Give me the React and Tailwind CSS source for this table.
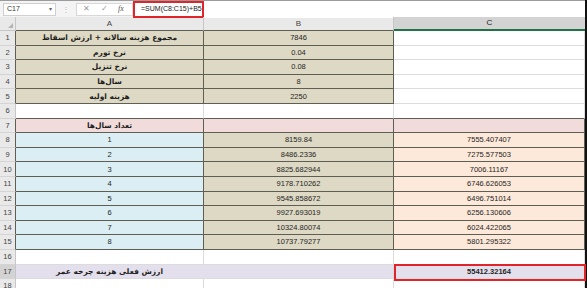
import React from 'react'

const FA = { fontFamily: '"DejaVu Sans", "Noto Sans", sans-serif' }
const NUM = { fontFamily: '"Liberation Sans", Arial, sans-serif' }

const DARK = 'border-[#5e5e52]'
const LIGHT = 'border-[#dcdcdc]'

// per-row cell styles
const ROWS = [
  { n: 1, a: 'مجموع هزینه سالانه + ارزش اسقاط', b: '7846', kind: 'input' },
  { n: 2, a: 'نرخ تورم', b: '0.04', kind: 'input' },
  { n: 3, a: 'نرخ تنزیل', b: '0.08', kind: 'input' },
  { n: 4, a: 'سال‌ها', b: '8', kind: 'input' },
  { n: 5, a: 'هزینه اولیه', b: '2250', kind: 'input' },
  { n: 6, kind: 'gap' },
  { n: 7, a: 'تعداد سال‌ها', kind: 'head' },
  { n: 8, a: '1', b: '8159.84', c: '7555.407407', kind: 'data' },
  { n: 9, a: '2', b: '8486.2336', c: '7275.577503', kind: 'data' },
  { n: 10, a: '3', b: '8825.682944', c: '7006.11167', kind: 'data' },
  { n: 11, a: '4', b: '9178.710262', c: '6746.626053', kind: 'data' },
  { n: 12, a: '5', b: '9545.858672', c: '6496.751014', kind: 'data' },
  { n: 13, a: '6', b: '9927.693019', c: '6256.130606', kind: 'data' },
  { n: 14, a: '7', b: '10324.80074', c: '6024.422065', kind: 'data' },
  { n: 15, a: '8', b: '10737.79277', c: '5801.295322', kind: 'data' },
  { n: 16, kind: 'blank' },
  { n: 17, a: 'ارزش فعلی هزینه چرخه عمر', c: '55412.32164', kind: 'total' },
  { n: 18, kind: 'blank' },
]

const STYLES = {
  input: {
    row: `border-r ${DARK}`,
    a: `bg-[#ddd9c4] border-r border-b ${DARK}`,
    b: `bg-[#ddd9c4] border-r border-b ${DARK}`,
    c: `bg-white border-r border-b ${LIGHT}`,
  },
  gap: {
    row: `border-r border-[#c6c6c6]`,
    a: `bg-white border-r border-b border-r-[#dcdcdc] border-b-[#5e5e52]`,
    b: `bg-white border-r border-b border-r-[#dcdcdc] border-b-[#5e5e52]`,
    c: `bg-white border-r border-b border-r-[#dcdcdc] border-b-[#5e5e52]`,
  },
  head: {
    row: `border-r ${DARK}`,
    a: `bg-[#f2dcdb] border-r border-b ${DARK}`,
    b: `bg-[#f2dcdb] border-r border-b ${DARK}`,
    c: `bg-[#f2dcdb] border-r border-b ${DARK}`,
  },
  data: {
    row: `border-r ${DARK}`,
    a: `bg-[#daeef3] border-r border-b ${DARK}`,
    b: `bg-[#ddd9c4] border-r border-b ${DARK}`,
    c: `bg-[#fde9d9] border-r border-b ${DARK}`,
  },
  blank: {
    row: `border-r border-[#c6c6c6]`,
    a: `bg-white border-r border-b ${LIGHT}`,
    b: `bg-white border-r border-b ${LIGHT}`,
    c: `bg-white border-r border-b ${LIGHT}`,
  },
  total: {
    row: `border-r border-[#c6c6c6]`,
    a: `bg-[#e4dfec] border-r border-b border-r-[#e4dfec] border-b-[#dcdcdc]`,
    b: `bg-[#e4dfec] border-r border-b ${LIGHT}`,
    c: `bg-[#e4dfec] border-r border-b ${LIGHT}`,
  },
}

function FormulaBar() {
  return (
    <div className="flex h-[17px] items-center bg-[#f4f4f4] border-t border-[#9b9b9b]">
      <div className="ml-[3px] flex h-[13px] w-[53px] items-center justify-between border border-[#d0d0d0] bg-white px-[3px]">
        <span className="text-[7px] text-[#333]" style={NUM}>C17</span>
        <span className="text-[6px] text-[#666]">▾</span>
      </div>
      <span className="ml-[6px] text-[8px] leading-none text-[#b8b8b8]">⋮</span>
      <div className="ml-[6px] flex h-[13px] w-[57px] items-center border border-[#d8d8d8] bg-white pl-[6px] text-[#9a9a9a]">
        <span className="text-[8px]" style={NUM}>✕</span>
        <span className="ml-[11px] text-[8px]" style={NUM}>✓</span>
        <span className="ml-[10px] text-[8px] italic text-[#555]" style={{ fontFamily: '"Liberation Serif", serif' }}>fx</span>
      </div>
      <div className="flex h-[17px] flex-1 items-center bg-white">
        <div className="flex h-[17px] w-[71px] items-center border-2 border-[#e0242a] pl-[6px]">
          <span className="text-[7px] text-[#222]" style={NUM}>=SUM(C8:C15)+B5</span>
        </div>
      </div>
    </div>
  )
}

function ColumnHeaders() {
  return (
    <div className="grid h-[14px] grid-cols-[16px_188px_190px_191px] bg-[#e9e9e9] text-[8px] text-[#444]" style={NUM}>
      <div className="relative border-r border-b border-[#c6c6c6]">
        <div className="absolute right-[2px] bottom-[2px] h-0 w-0 border-b-[5px] border-l-[5px] border-b-[#b5b5b5] border-l-transparent" />
      </div>
      <div className="flex items-center justify-center border-r border-b border-r-[#c6c6c6] border-b-[#5e5e52]">A</div>
      <div className="flex items-center justify-center border-r border-b border-r-[#c6c6c6] border-b-[#5e5e52]">B</div>
      <div className="flex items-center justify-center border-b-2 border-[#217346] bg-[#d3d3d3] text-[#222]">C</div>
    </div>
  )
}

function Cell({ className, children, fa, bold, relative }) {
  return (
    <div
      className={`flex items-center justify-center whitespace-nowrap text-[7.5px] text-[#1f1f1f] ${bold ? 'font-bold' : ''} ${relative ? 'relative' : 'overflow-hidden'} ${className}`}
      style={fa ? FA : NUM}
      dir={fa ? 'rtl' : 'ltr'}
    >
      {children}
    </div>
  )
}

export default function App() {
  return (
    <div className="relative flex h-[288px] w-[587px] overflow-hidden bg-white">
      <div className="w-[585px]">
        <FormulaBar />
        <ColumnHeaders />
        {ROWS.map(r => {
          const s = STYLES[r.kind]
          const isText = r.kind === 'input' || r.kind === 'head' || r.kind === 'total'
          return (
            <div key={r.n} className={`grid h-[14.6px] grid-cols-[16px_188px_190px_191px] ${r.kind === 'total' ? 'relative z-10' : ''}`}>
              <div
                className={`flex items-center justify-center border-b border-b-[#d4d4d4] text-[7.5px] text-[#444] ${r.n === 17 ? 'bg-[#d3d3d3]' : 'bg-[#e9e9e9]'} ${s.row}`}
                style={NUM}
              >
                {r.n}
              </div>
              <Cell className={s.a} fa={isText} bold={isText}>{r.a}</Cell>
              <Cell className={s.b}>{r.b}</Cell>
              <Cell className={s.c} bold={r.kind === 'total'} relative={r.kind === 'total'}>
                {r.c}
                {r.kind === 'total' && (
                  <div className="absolute top-[-1px] right-[-2px] bottom-[-3px] left-0 border-2 border-[#e0242a]" />
                )}
              </Cell>
            </div>
          )
        })}
      </div>
      <div className="w-[2px] bg-[#111]" />
    </div>
  )
}
